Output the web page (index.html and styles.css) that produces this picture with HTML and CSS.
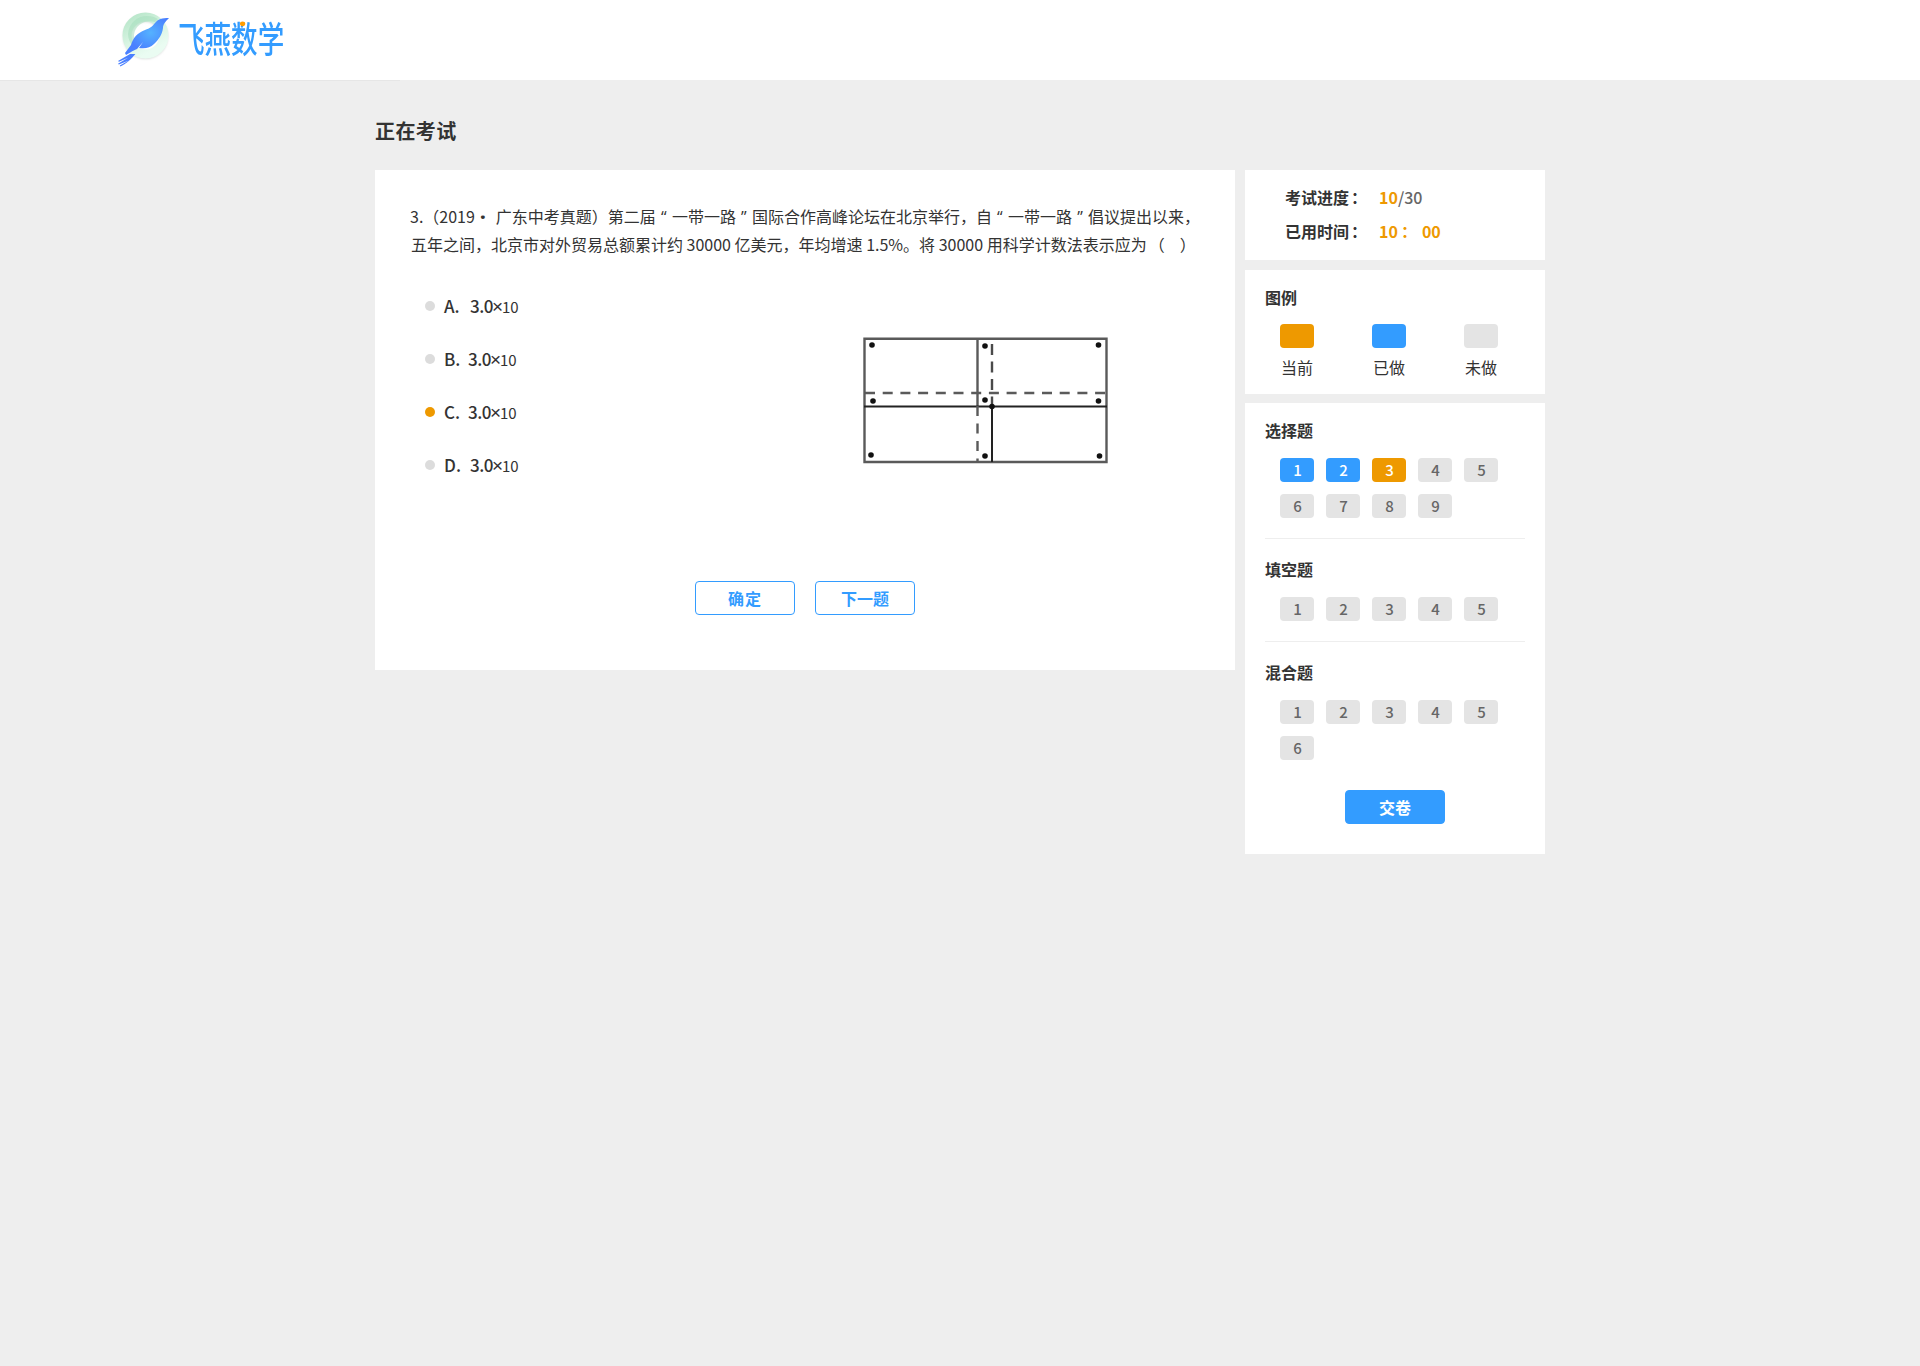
FILE: index.html
```html
<!DOCTYPE html>
<html lang="zh-CN">
<head>
<meta charset="utf-8">
<title>飞燕数学</title>
<link rel="stylesheet" href="styles.css">
</head>
<body>
<header class="header">
  <svg class="logo-mark" width="56" height="56" viewBox="0 0 56 56">
    <defs>
      <radialGradient id="bird" cx="0.58" cy="0.4" r="0.5"><stop offset="0" stop-color="#55b2ff"/><stop offset="1" stop-color="#4a80ff"/></radialGradient>
      <linearGradient id="ring" x1="0.2" y1="0" x2="0.7" y2="0.9"><stop offset="0" stop-color="#bce8cd"/><stop offset="0.55" stop-color="#daf5e4"/><stop offset="1" stop-color="#eafcf2"/></linearGradient>
      <filter id="soft" x="-20%" y="-20%" width="140%" height="140%"><feGaussianBlur stdDeviation="1"/></filter>
    </defs>
    <circle cx="28.500" cy="26.500" r="18.500" fill="none" stroke="#d8ddda" stroke-width="8" filter="url(#soft)"/>
    <circle cx="28.500" cy="25.500" r="18.500" fill="none" stroke="url(#ring)" stroke-width="9"/>
    <path d="M11 24C12 13 20 6 30 6c5 0 8 1 11 3l-3 3C28 9 18 15 17 25c0 4 1 7 3 10l-3 3c-4-5-6-9-6-14z" fill="#a5dfbd" opacity=".55"/>
    <path d="M52 8C45 8 41 9 38 13c-3 4-5 5-10 7-8 3-12 8-14 15L8 43l1 2c5-3 8-5 11-6l6-7-4 6c6 1 11 0 15-4 5-5 8-9 9-16 0-4 3-7 6-10z" fill="url(#bird)"/>
    <path d="M13 44l-12 7 1 .8 9-4-10 6 .8.800 10-4-9 5 .6.900c6-3 9-6 12-9l3-3.500z" fill="#4a80ff"/>
  </svg>
  <span class="logo-text">飞燕数学<i class="logo-dot"></i></span>
</header>
<main class="page">
  <h1 class="page-title">正在考试</h1>
  <div class="columns">
    <section class="question">
      <p class="stem"><span class="line">3.（2019<span class="mid">·</span>广东中考真题）第二届<span class="quote">“</span>一带一路<span class="quote">”</span>国际合作高峰论坛在北京举行，自<span class="quote">“</span>一带一路<span class="quote">”</span>倡议提出以来，</span><span class="line">五年之间，北京市对外贸易总额累计约 30000 亿美元，年均增速 1.5%。将 30000 用科学计数法表示应为<span class="blank">（</span><span class="blank-end">）</span></span></p>
      <div class="body">
        <ul class="options">
          <li class="option wide"><i class="radio"></i><span class="key">A.</span><b>3.0</b><span class="times">×</span><span class="power">10</span></li>
          <li class="option"><i class="radio"></i><span class="key">B.</span><b>3.0</b><span class="times">×</span><span class="power">10</span></li>
          <li class="option"><i class="radio checked"></i><span class="key">C.</span><b>3.0</b><span class="times">×</span><span class="power">10</span></li>
          <li class="option wide"><i class="radio"></i><span class="key">D.</span><b>3.0</b><span class="times">×</span><span class="power">10</span></li>
        </ul>
        <svg class="figure" width="250" height="130" viewBox="860 335 250 130" fill="none">
          <path d="M864.500 338.700H1106.500V462H864.500zM977.500 339V406" stroke="#5a5a5a" stroke-width="2.400"/>
          <path d="M864 406.500H1107M992 406V462" stroke="#222" stroke-width="2"/>
          <path d="M865 393H1106" stroke="#5a5a5a" stroke-width="2.500" stroke-dasharray="10 7.700"/>
          <path d="M992 344V406" stroke="#4a4a4a" stroke-width="2.400" stroke-dasharray="11 6.500"/>
          <path d="M977.500 406V462" stroke="#5a5a5a" stroke-width="2.400" stroke-dasharray="10 7.500"/>
          <g fill="#111"><circle cx="872" cy="345" r="2.800"/><circle cx="985" cy="346" r="2.800"/><circle cx="1098.500" cy="345" r="2.800"/><circle cx="873" cy="401" r="2.800"/><circle cx="985" cy="400" r="2.800"/><circle cx="1098.500" cy="401" r="2.800"/><circle cx="992" cy="406.500" r="2.800"/><circle cx="871" cy="455" r="2.800"/><circle cx="985" cy="456" r="2.800"/><circle cx="1099.500" cy="456" r="2.800"/></g>
        </svg>
      </div>
      <div class="actions"><button class="btn spaced">确定</button><button class="btn">下一题</button></div>
    </section>
    <aside class="side">
      <section class="panel status">
        <div class="stat"><span class="label">考试进度<span class="sep">：</span></span><span class="now">10</span><span class="total">/30</span></div>
        <div class="stat"><span class="label">已用时间<span class="sep">：</span></span><span class="now">10</span><span class="now colon">：</span><span class="now">00</span></div>
      </section>
      <section class="panel legend">
        <h2 class="heading">图例</h2>
        <div class="legend-items">
          <div class="legend-item"><i class="swatch current"></i>当前</div>
          <div class="legend-item"><i class="swatch done"></i>已做</div>
          <div class="legend-item"><i class="swatch"></i>未做</div>
        </div>
      </section>
      <section class="panel sheet">
        <div class="group">
          <h2 class="heading">选择题</h2>
          <div class="numbers"><span class="num done">1</span><span class="num done">2</span><span class="num current">3</span><span class="num">4</span><span class="num">5</span><span class="num">6</span><span class="num">7</span><span class="num">8</span><span class="num">9</span></div>
        </div>
        <div class="group">
          <h2 class="heading">填空题</h2>
          <div class="numbers"><span class="num">1</span><span class="num">2</span><span class="num">3</span><span class="num">4</span><span class="num">5</span></div>
        </div>
        <div class="group">
          <h2 class="heading">混合题</h2>
          <div class="numbers"><span class="num">1</span><span class="num">2</span><span class="num">3</span><span class="num">4</span><span class="num">5</span><span class="num">6</span></div>
        </div>
        <button class="btn primary">交卷</button>
      </section>
    </aside>
  </div>
</main>
</body>
</html>
```

FILE: styles.css
```css
* { box-sizing: border-box; margin: 0; padding: 0; }
body { background: #eee linear-gradient(#e6e6e6, #e6e6e6) 0 80px / 400px 1px no-repeat; color: #333; font: 16px/22px "Noto Sans CJK SC", sans-serif; min-height: 1366px; }
i { font-style: normal; }
.header { height: 80px; background: #fff; padding: 10px 0 0 117px; display: flex; }
.logo-mark { overflow: visible; flex: none; }
.logo-text { position: relative; width: 120px; height: 36px; margin: 9px 0 0 5px; font-size: 30px; line-height: 36px; font-weight: 500; color: #339cff; white-space: nowrap; transform: scale(.885, 1.2); transform-origin: 0 50%; }
.logo-dot { position: absolute; left: 70px; top: 5px; width: 6px; height: 4px; border-radius: 50%; background: #ff9c00; }
.page { width: 1170px; margin: 0 auto; padding-top: 36px; }
.page-title { font-size: 20px; line-height: 30px; font-weight: 700; letter-spacing: .4px; }
.columns { display: flex; gap: 10px; margin-top: 24px; align-items: flex-start; }
.question { width: 860px; height: 500px; background: #fff; padding: 32px 35px 0; }
.line { display: block; height: 28px; line-height: 28px; white-space: nowrap; }
.line + .line { padding-left: 1px; }
.mid { display: inline-block; width: 21px; padding-left: 5px; font: 700 22px/20px "Noto Sans", sans-serif; vertical-align: -2px; }
.quote { display: inline-block; width: 16px; text-align: center; font-family: "Open Sans", sans-serif; line-height: 20px; }
.blank-end { margin-left: 15px; }
.blank { margin-left: 2px; }
.body { display: flex; justify-content: space-between; margin-top: 35px; }
.options { list-style: none; padding-left: 15px; }
.option { display: flex; align-items: center; height: 26px; margin-bottom: 27px; font-size: 17px; font-weight: 500; }
.option b { font-weight: 500; letter-spacing: -.5px; }
.radio { width: 10px; height: 10px; border-radius: 50%; background: #dcdcdc; margin-right: 9px; }
.radio.checked { background: #ee9900; }
.key { width: 24px; }
.wide .key { width: 26px; }
.times { width: 9px; font: 400 19px/22px "Liberation Sans", sans-serif; margin-top: 2px; text-indent: -1px; }
.power { font-size: 15px; font-weight: 400; margin-top: 1px; }
.figure { margin: 42px 90px 0 0; }
.actions { display: flex; justify-content: center; gap: 20px; margin-top: 76px; }
.btn { width: 100px; height: 34px; border: 1px solid #339cff; border-radius: 4px; background: #fff; color: #339cff; font: 700 16px/30px "Noto Sans CJK SC", sans-serif; }
.btn.spaced { letter-spacing: 1px; }
.btn.primary { display: block; margin: 30px auto 0; background: #339cff; color: #fff; }
.side { width: 300px; }
.panel { background: #fff; }
.status { height: 90px; padding: 10px 40px 0; }
.stat { display: flex; height: 34px; line-height: 34px; font-weight: 500; }
.label { width: 94px; font-weight: 700; white-space: nowrap; }
.sep, .colon { font-family: "Noto Sans CJK JP", sans-serif; }
.sep { margin-left: 2px; }
.now { color: #ee9900; font-weight: 700; }
.total { color: #666; }
.colon { width: 24px; text-indent: -1px; }
.legend { height: 124px; margin-top: 10px; padding: 16px 20px 0; }
.heading { font-size: 16px; line-height: 22px; font-weight: 700; }
.legend-items { display: flex; gap: 58px; padding: 16px 0 0 15px; }
.legend-item { width: 34px; white-space: nowrap; text-align: center; line-height: 24px; }
.swatch { display: block; width: 34px; height: 24px; border-radius: 4px; background: #e4e4e4; margin-bottom: 7px; }
.current.current { background: #ee9900; color: #fff; }
.done.done { background: #339cff; color: #fff; }
.sheet { margin-top: 9px; height: 451px; padding: 16px 20px 0; }
.group + .group { border-top: 1px solid #eee; margin-top: 20px; padding-top: 19px; }
.numbers { display: flex; flex-wrap: wrap; gap: 12px; padding: 17px 0 0 15px; }
.num { width: 34px; height: 24px; padding-left: 1px; border-radius: 4px; background: #e4e4e4; color: #666; font-size: 15px; line-height: 23px; font-weight: 500; text-align: center; }
```
